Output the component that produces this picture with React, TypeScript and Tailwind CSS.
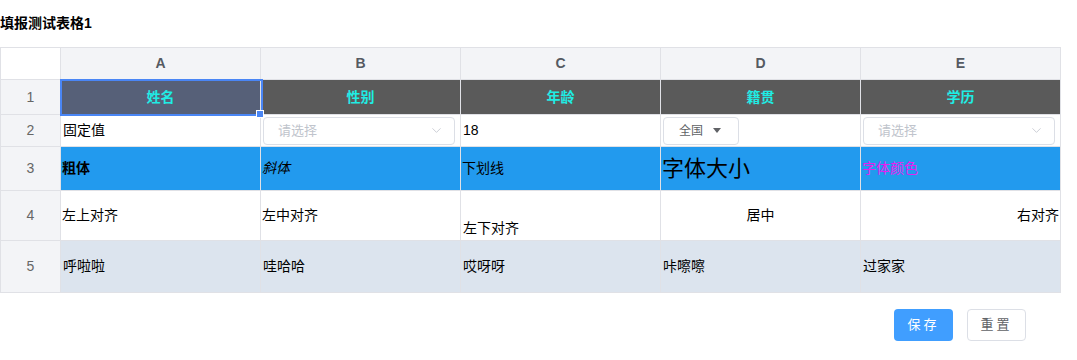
import { ChevronDown } from "lucide-react"

const font = "font-['Liberation_Sans','Noto_Sans_CJK_SC',sans-serif]"

function Cell({ className = "", children }: { className?: string; children?: React.ReactNode }) {
  return <div className={`border-r border-b border-[#e0e1e6] flex text-[14px] ${className}`}>{children}</div>
}

function Placeholder() {
  return (
    <div className="mx-[2px] my-auto h-[28px] w-[192px] rounded-[4px] border border-[#dcdfe6] bg-white flex items-center justify-between pl-[14px] pr-[10px]">
      <span className="text-[13px] text-[#c0c4cc]">请选择</span>
      <ChevronDown className="h-[15px] w-[15px] text-[#c0c4cc]" strokeWidth={1.3} />
    </div>
  )
}

export default function App() {
  const cols = ["A", "B", "C", "D", "E"]
  const heads = ["姓名", "性别", "年龄", "籍贯", "学历"]
  return (
    <div className={`${font} w-[1077px] h-[360px] bg-white text-black`}>
      <div className="h-[47px] flex items-center text-[14px] font-bold">填报测试表格1</div>
      <div className="relative w-[1061px] grid grid-cols-[60px_repeat(5,200px)] grid-rows-[32px_35px_32px_44px_50px_52px] border-l border-t border-[#e0e1e6]">
        <Cell className="bg-white" />
        {cols.map((c) => (
          <Cell key={c} className="bg-[#f3f4f7] items-center justify-center font-bold text-[#555a62]">
            {c}
          </Cell>
        ))}

        <Cell className="bg-[#f3f4f7] items-center justify-center text-[#666]">1</Cell>
        {heads.map((h, i) => (
          <Cell
            key={h}
            className={`${i === 0 ? "bg-[#566078]" : "bg-[#5a5a5a]"} items-center justify-center font-bold text-[#20ece4]`}
          >
            {h}
          </Cell>
        ))}

        <Cell className="bg-[#f3f4f7] items-center justify-center text-[#666]">2</Cell>
        <Cell className="items-center pl-[2px]">固定值</Cell>
        <Cell>
          <Placeholder />
        </Cell>
        <Cell className="items-center pl-[2px]">18</Cell>
        <Cell>
          <div className="mx-[2px] my-auto h-[28px] w-[76px] rounded-[4px] border border-[#dcdfe6] bg-white flex items-center pl-[15px] gap-[10px] text-[12px] text-[#606266]">
            <span>全国</span>
            <span className="w-0 h-0 border-l-[4px] border-r-[4px] border-t-[5px] border-l-transparent border-r-transparent border-t-[#606266]" />
          </div>
        </Cell>
        <Cell>
          <Placeholder />
        </Cell>

        <Cell className="bg-[#f3f4f7] items-center justify-center text-[#666]">3</Cell>
        <Cell className="bg-[#229aee] items-center pl-[1px] font-bold">粗体</Cell>
        <Cell className="bg-[#229aee] items-center pl-[1px] italic">斜体</Cell>
        <Cell className="bg-[#229aee] items-center pl-[1px]">下划线</Cell>
        <Cell className="bg-[#229aee] items-center pl-[1px] text-[22px]">字体大小</Cell>
        <Cell className="bg-[#229aee] items-center pl-[1px] text-[#e81ef0]">字体颜色</Cell>

        <Cell className="bg-[#f3f4f7] items-center justify-center text-[#666]">4</Cell>
        <Cell className="items-center pl-[1px]">左上对齐</Cell>
        <Cell className="items-center pl-[1px]">左中对齐</Cell>
        <Cell className="items-end pl-[2px] pb-[1px]">左下对齐</Cell>
        <Cell className="items-center justify-center">居中</Cell>
        <Cell className="items-center justify-end pr-[1px]">右对齐</Cell>

        <Cell className="bg-[#f3f4f7] items-center justify-center text-[#666]">5</Cell>
        {["呼啦啦", "哇哈哈", "哎呀呀", "咔嚓嚓", "过家家"].map((t) => (
          <Cell key={t} className="bg-[#dce4ee] items-center pl-[2px]">
            {t}
          </Cell>
        ))}

        <div className="absolute left-[59px] top-[31px] w-[203px] h-[37px] border-2 border-[#4a86f5] pointer-events-none" />
        <div className="absolute left-[255px] top-[62px] w-[8px] h-[8px] bg-[#4a86f5] border border-white" />
      </div>
      <div className="w-[1026px] flex justify-end gap-[14px] mt-[16px]">
        <button className="h-[32px] w-[59px] rounded-[4px] bg-[#409eff] text-white text-[13px] tracking-[3px]">保存</button>
        <button className="h-[32px] w-[59px] rounded-[4px] border border-[#dcdfe6] bg-white text-[#606266] text-[13px] tracking-[3px]">重置</button>
      </div>
    </div>
  )
}
